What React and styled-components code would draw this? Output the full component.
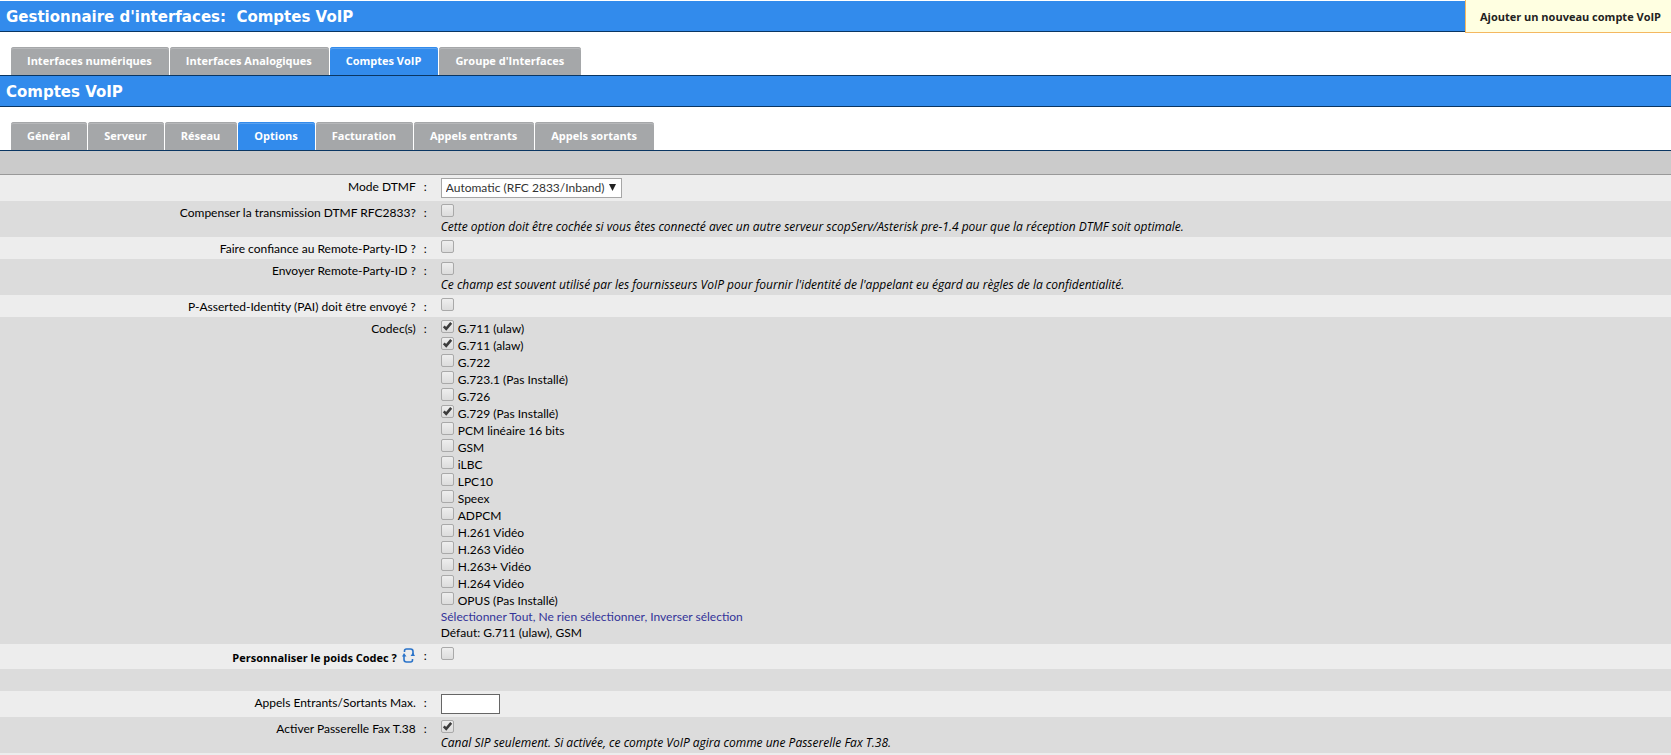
import React, { useState } from 'react';
import styled, { createGlobalStyle } from 'styled-components';

const BOLD = "bold 11px/27px 'Open Sans', 'Noto Sans', sans-serif";

const GlobalStyle = createGlobalStyle`
  * { box-sizing: border-box; }
  body {
    margin: 0;
    background: #fff;
    color: #000;
    font: 12px/16px Lato, 'Open Sans', sans-serif;
  }
`;

const HeaderRow = styled.header`
  display: flex;
  align-items: flex-start;
`;

const TitleBar = styled.div`
  flex: 1;
  margin-top: ${(p) => (p.$top ? '1px' : '0')};
  padding: 2px 6px 0;
  border-bottom: 1px solid #0a3663;
  background: #328bec;
`;

const Title = styled.h1`
  margin: 0;
  color: #fff;
  font: bold 15px/28px 'DejaVu Sans', sans-serif;
  white-space: pre-wrap;
`;

const AddButton = styled.button`
  height: 33px;
  padding: 0 10px 0 14px;
  border: solid #f4b860;
  border-width: 0 0 1px 1px;
  background: #ffffe1;
  color: #222;
  font: ${BOLD};
  cursor: pointer;
`;

const Tabs = styled.nav`
  display: flex;
  gap: 1px;
  padding: ${(p) => (p.$first ? '14px' : '15px')} 11px 0;
  border-bottom: 1px solid #0a3663;
`;

const Tab = styled.a`
  padding: 0 17px 1px 16px;
  border-radius: 3px 3px 0 0;
  background: ${(p) => (p.$active ? '#328bec' : '#a5a7a9')};
  box-shadow: inset 0 1px 0 ${(p) => (p.$active ? '#328bec' : '#a5a7a9')},
    inset 0 2px 0 rgba(255, 255, 255, 0.2);
  color: #fff;
  font: ${BOLD};
  text-decoration: none;
`;

const Band = styled.div`
  height: 24px;
  border-bottom: 1px solid #999;
  background: #cbcbcb;
`;

const Row = styled.div`
  display: grid;
  grid-template-columns: 25% 16px 1fr;
  min-height: 22px;
  background: #dcdcdc;

  &:nth-child(odd) {
    background: #ededed;
  }
`;

const LabelCell = styled.div`
  display: flex;
  justify-content: flex-end;
  gap: 5px;
  padding: 4px 2px 2px 0;
`;

const BoldLabelCell = styled(LabelCell)`
  padding: 4px 3px 1px 0;
  font: ${BOLD};
  line-height: 20px;
`;

const Colon = styled.span`
  padding: 4px 0 2px 6px;
`;

const Field = styled.div`
  padding: 3px 0 2px 7px;
`;

const Hint = styled.div`
  margin-top: 2px;
  font-family: 'Open Sans', 'Noto Sans', sans-serif;
  font-style: italic;
`;

const CheckWrap = styled.span`
  display: block;
  position: relative;
  width: 13px;
  height: 13px;
`;

const CheckInput = styled.input`
  appearance: none;
  display: block;
  width: 13px;
  height: 13px;
  margin: 0;
  border: 1px solid #a9a9a9;
  border-radius: 2px;
  background: linear-gradient(#eee, #dcdcdc);

  & + svg { display: none; }
  &:checked + svg { display: block; }
`;

const Tick = styled.svg`
  position: absolute;
  inset: 0;
  pointer-events: none;
`;

const CodecItem = styled.div`
  display: flex;
  align-items: flex-start;
  gap: 4px;
  height: 17px;
  line-height: 18px;
`;

const CodecDefault = styled.div`
  padding-bottom: 1px;
`;

const SelectWrap = styled.span`
  display: block;
  position: relative;
  width: 181px;
  height: 21px;
`;

const Select = styled.select`
  appearance: none;
  display: block;
  width: 100%;
  height: 20px;
  padding: 0 16px 0 4px;
  border: 1px solid #a6a6a6;
  border-radius: 0;
  background: #fff;
  color: #333;
  font: inherit;
`;

const Arrow = styled.svg`
  position: absolute;
  top: 6px;
  right: 6px;
  pointer-events: none;
`;

const NumberBox = styled.input`
  display: block;
  width: 59px;
  height: 20px;
  margin: 0 0 1px;
  padding: 1px 3px;
  border: 1px solid #666;
  background: #fff;
  font: inherit;
`;

const ActionLink = styled.a`
  color: #333399;
  text-decoration: none;
`;

function Check({ id, checked }) {
  const [on, setOn] = useState(Boolean(checked));
  return (
    <CheckWrap>
      <CheckInput type="checkbox" id={id} checked={on} onChange={() => setOn(!on)} />
      <Tick width="13" height="13" viewBox="0 0 13 13" aria-hidden="true">
        <path d="M2.800 6.400l2.400 2.400L10.200 2.800" fill="none" stroke="#3c3c3c" strokeWidth="2.600" />
      </Tick>
    </CheckWrap>
  );
}

function ReloadIcon() {
  return (
    <svg width="13" height="15" viewBox="0 0 13 15" aria-hidden="true">
      <g fill="none" stroke="#2a73c9" strokeWidth="1.600">
        <path d="M2.500 4V3Q2.500 1 4.500 1H8.500Q11 1 11 3.500V6" />
        <path d="M10.500 11V12Q10.500 14 8.500 14H4.500Q2 14 2 11.500V8" />
      </g>
      <path d="M8.500 8L11 4.500 13 8zM0 8.500L2 5 4.500 8.500z" fill="#2a73c9" />
    </svg>
  );
}

function FormRow({ id, label, bold, icon, hint, children }) {
  const Cell = bold ? BoldLabelCell : LabelCell;
  return (
    <Row>
      <Cell>
        <label htmlFor={id}>{label}</label>
        {icon}
      </Cell>
      <Colon>:</Colon>
      <Field>
        {children}
        {hint && <Hint>{hint}</Hint>}
      </Field>
    </Row>
  );
}

function TabBar({ items, active, first }) {
  return (
    <Tabs $first={first}>
      {items.map((t) => (
        <Tab key={t} href="#" $active={t === active}>{t}</Tab>
      ))}
    </Tabs>
  );
}

const CODECS = [
  ['G.711 (ulaw)', true],
  ['G.711 (alaw)', true],
  ['G.722'],
  ['G.723.1 (Pas Installé)'],
  ['G.726'],
  ['G.729 (Pas Installé)', true],
  ['PCM linéaire 16 bits'],
  ['GSM'],
  ['iLBC'],
  ['LPC10'],
  ['Speex'],
  ['ADPCM'],
  ['H.261 Vidéo'],
  ['H.263 Vidéo'],
  ['H.263+ Vidéo'],
  ['H.264 Vidéo'],
  ['OPUS (Pas Installé)'],
];

export default function App() {
  return (
    <>
      <GlobalStyle />
      <HeaderRow>
        <TitleBar $top>
          <Title>{"Gestionnaire d'interfaces:  Comptes VoIP"}</Title>
        </TitleBar>
        <AddButton type="button">Ajouter un nouveau compte VoIP</AddButton>
      </HeaderRow>
      <TabBar
        first
        items={['Interfaces numériques', 'Interfaces Analogiques', 'Comptes VoIP', "Groupe d'Interfaces"]}
        active="Comptes VoIP"
      />
      <TitleBar>
        <Title as="h2">Comptes VoIP</Title>
      </TitleBar>
      <TabBar
        items={['Général', 'Serveur', 'Réseau', 'Options', 'Facturation', 'Appels entrants', 'Appels sortants']}
        active="Options"
      />
      <Band />
      <form>
        <FormRow id="dtmf" label="Mode DTMF">
          <SelectWrap>
            <Select id="dtmf">
              <option>Automatic (RFC 2833/Inband)</option>
            </Select>
            <Arrow width="7" height="7" viewBox="0 0 7 7" aria-hidden="true">
              <path d="M0 0h7L3.500 7z" fill="#222" />
            </Arrow>
          </SelectWrap>
        </FormRow>
        <FormRow
          id="rfc"
          label="Compenser la transmission DTMF RFC2833?"
          hint="Cette option doit être cochée si vous êtes connecté avec un autre serveur scopServ/Asterisk pre-1.4 pour que la réception DTMF soit optimale."
        >
          <Check id="rfc" />
        </FormRow>
        <FormRow id="trust" label="Faire confiance au Remote-Party-ID ?">
          <Check id="trust" />
        </FormRow>
        <FormRow
          id="send"
          label="Envoyer Remote-Party-ID ?"
          hint="Ce champ est souvent utilisé par les fournisseurs VoIP pour fournir l'identité de l'appelant eu égard au règles de la confidentialité."
        >
          <Check id="send" />
        </FormRow>
        <FormRow id="pai" label="P-Asserted-Identity (PAI) doit être envoyé ?">
          <Check id="pai" />
        </FormRow>
        <FormRow id="codec0" label="Codec(s)">
          {CODECS.map(([name, on], i) => (
            <CodecItem key={name}>
              <Check id={`codec${i}`} checked={on} />
              <label htmlFor={`codec${i}`}>{name}</label>
            </CodecItem>
          ))}
          <div>
            <ActionLink href="#">Sélectionner Tout,</ActionLink>{' '}
            <ActionLink href="#">Ne rien sélectionner,</ActionLink>{' '}
            <ActionLink href="#">Inverser sélection</ActionLink>
          </div>
          <CodecDefault>Défaut: G.711 (ulaw), GSM</CodecDefault>
        </FormRow>
        <FormRow id="weight" label="Personnaliser le poids Codec ?" bold icon={<ReloadIcon />}>
          <Check id="weight" />
        </FormRow>
        <Row />
        <FormRow id="max" label="Appels Entrants/Sortants Max.">
          <NumberBox id="max" type="text" />
        </FormRow>
        <FormRow
          id="fax"
          label="Activer Passerelle Fax T.38"
          hint="Canal SIP seulement. Si activée, ce compte VoIP agira comme une Passerelle Fax T.38."
        >
          <Check id="fax" checked />
        </FormRow>
        <Row />
      </form>
    </>
  );
}
